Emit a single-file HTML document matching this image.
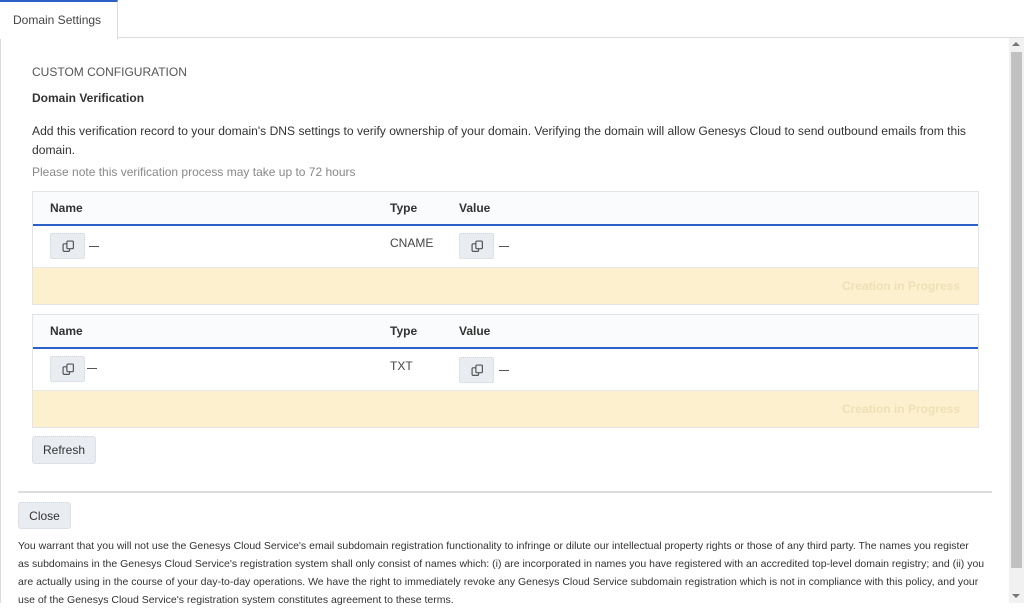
<!DOCTYPE html>
<html><head><meta charset="utf-8"><style>
*{box-sizing:border-box;margin:0;padding:0}
body{width:1024px;height:603px;overflow:hidden;background:#fff;font-family:"Liberation Sans",sans-serif;color:#333;position:relative}
.abs{position:absolute}
.tab{left:0;top:0;width:118px;height:39px;border-top:2px solid #2a60c8;border-right:1px solid #d8dbe0;background:#fff;font-size:12px;color:#444;padding:11px 0 0 13px;z-index:2}
.topline{left:117px;top:37px;width:907px;height:1px;background:#d8dbe0}
.leftline{left:0;top:38px;width:1px;height:565px;background:#d8dbe0}
.sb{left:1009px;top:38px;width:15px;height:565px;background:#f1f1f1}
.thumb{left:1011px;top:52px;width:11px;height:516px;background:#c1c1c1}
.t{font-size:12px}
.tbl{left:32px;width:947px;border:1px solid #e2e4e8}
.hd{height:34px;background:#fafbfc;border-bottom:2px solid #2a60c8;position:relative;font-weight:bold;font-size:12px;color:#333}
.row{height:41px;position:relative;background:#fff}
.yel{height:37px;background:#fdf0cf;border-top:1px solid #e8e8e8;position:relative}
.yel span{position:absolute;right:18px;top:11px;font-size:12px;font-weight:bold;color:#ede1b4}
.cp{position:absolute;width:35px;height:26px;background:#e9ecf1;border:1px dotted #d0d5dd;border-radius:2px}
.cp svg{position:absolute;left:11px;top:6px}
.dash{position:absolute;width:10px;height:1px;background:#555}
.btn{background:#e9ecf1;border:1px dotted #d0d5dd;border-radius:3px;font-size:12px;color:#333;text-align:center}
.nw{white-space:nowrap}
</style></head><body>
<div class="abs tab">Domain Settings</div>
<div class="abs topline"></div>
<div class="abs leftline"></div>
<div class="abs sb"></div>
<div class="abs thumb"></div>
<div class="abs" style="left:1012px;top:42px;width:0;height:0;border-left:4px solid transparent;border-right:4px solid transparent;border-bottom:4px solid #777"></div>
<div class="abs" style="left:1012px;top:594px;width:0;height:0;border-left:4px solid transparent;border-right:4px solid transparent;border-top:4px solid #777"></div>

<div class="abs t" style="left:32px;top:65px;color:#555">CUSTOM CONFIGURATION</div>
<div class="abs t" style="left:32px;top:91px;font-weight:bold;color:#333">Domain Verification</div>
<div class="abs nw" style="left:32px;top:122px;font-size:12.1px;line-height:19px;color:#333">Add this verification record to your domain's DNS settings to verify ownership of your domain. Verifying the domain will allow Genesys Cloud to send outbound emails from this<br>domain.</div>
<div class="abs t" style="left:32px;top:165px;color:#888">Please note this verification process may take up to 72 hours</div>

<div class="abs tbl" style="top:191px">
 <div class="hd"><span class="abs" style="left:17px;top:9px">Name</span><span class="abs" style="left:357px;top:9px">Type</span><span class="abs" style="left:426px;top:9px">Value</span></div>
 <div class="row">
  <div class="cp" style="left:17px;top:7px"><svg width="13" height="13" viewBox="0 0 12 12" fill="none" stroke="#555" stroke-width="1.1"><rect x="1" y="3.5" width="6" height="7" rx="1"/><rect x="4.5" y="1" width="6" height="7" rx="1" fill="#e9ecf1"/></svg></div>
  <div class="dash" style="left:56px;top:20px"></div>
  <span class="abs t" style="left:357px;top:10px;color:#444">CNAME</span>
  <div class="cp" style="left:426px;top:7px"><svg width="13" height="13" viewBox="0 0 12 12" fill="none" stroke="#555" stroke-width="1.1"><rect x="1" y="3.5" width="6" height="7" rx="1"/><rect x="4.5" y="1" width="6" height="7" rx="1" fill="#e9ecf1"/></svg></div>
  <div class="dash" style="left:466px;top:20px"></div>
 </div>
 <div class="yel"><span>Creation in Progress</span></div>
</div>

<div class="abs tbl" style="top:314px">
 <div class="hd"><span class="abs" style="left:17px;top:9px">Name</span><span class="abs" style="left:357px;top:9px">Type</span><span class="abs" style="left:426px;top:9px">Value</span></div>
 <div class="row">
  <div class="cp" style="left:17px;top:7px"><svg width="13" height="13" viewBox="0 0 12 12" fill="none" stroke="#555" stroke-width="1.1"><rect x="1" y="3.5" width="6" height="7" rx="1"/><rect x="4.5" y="1" width="6" height="7" rx="1" fill="#e9ecf1"/></svg></div>
  <div class="dash" style="left:54px;top:19px"></div>
  <span class="abs t" style="left:357px;top:10px;color:#444">TXT</span>
  <div class="cp" style="left:426px;top:8px"><svg width="13" height="13" viewBox="0 0 12 12" fill="none" stroke="#555" stroke-width="1.1"><rect x="1" y="3.5" width="6" height="7" rx="1"/><rect x="4.5" y="1" width="6" height="7" rx="1" fill="#e9ecf1"/></svg></div>
  <div class="dash" style="left:466px;top:21px"></div>
 </div>
 <div class="yel"><span>Creation in Progress</span></div>
</div>

<div class="abs btn" style="left:32px;top:436px;width:64px;height:28px;line-height:27px">Refresh</div>
<div class="abs" style="left:18px;top:491px;width:974px;height:2px;background:#ddd"></div>
<div class="abs btn" style="left:18px;top:502px;width:53px;height:27px;line-height:26px">Close</div>
<div class="abs nw" style="left:18px;top:537px;font-size:10.5px;line-height:18px;color:#333">You warrant that you will not use the Genesys Cloud Service's email subdomain registration functionality to infringe or dilute our intellectual property rights or those of any third party. The names you register<br>as subdomains in the Genesys Cloud Service's registration system shall only consist of names which: (i) are incorporated in names you have registered with an accredited top-level domain registry; and (ii) you<br>are actually using in the course of your day-to-day operations. We have the right to immediately revoke any Genesys Cloud Service subdomain registration which is not in compliance with this policy, and your<br>use of the Genesys Cloud Service's registration system constitutes agreement to these terms.</div>
</body></html>
